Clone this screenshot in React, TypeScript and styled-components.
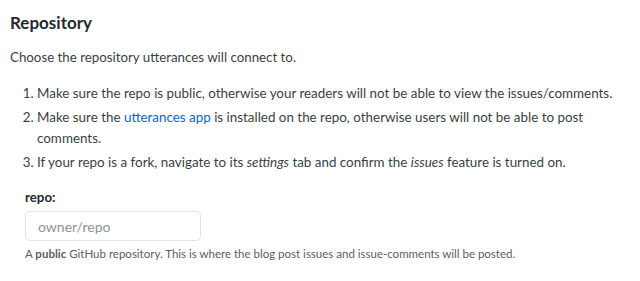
import React from "react";
import styled, { createGlobalStyle } from "styled-components";

const GlobalStyle = createGlobalStyle`
  body {
    margin: 0;
    background: #ffffff;
    font-family: Lato, "Open Sans", sans-serif;
    color: #24292e;
  }
`;

const Section = styled.section`
  padding: 11px 10px 0 10px;
`;

const Heading = styled.h3`
  margin: 0;
  font-size: 17px;
  font-weight: 700;
  line-height: 24px;
  color: #24292e;
`;

const Lead = styled.p`
  margin: 12px 0 0 0;
  font-size: 13.3px;
  line-height: 21px;
  color: #3a3f44;
`;

const Steps = styled.ol`
  margin: 15px 0 0 0;
  padding-left: 27px;
  font-size: 13.4px;
  line-height: 21px;
  color: #3a3f44;
`;

const Step = styled.li`
  & + & {
    margin-top: 3px;
  }
`;

const Link = styled.a`
  color: #0366d6;
  text-decoration: none;
`;

const Field = styled.div`
  margin-top: 14px;
  padding-left: 15px;
  display: flex;
  flex-direction: column;
  align-items: flex-start;
`;

const Label = styled.label`
  font-size: 13.3px;
  font-weight: 700;
  line-height: 20px;
  color: #24292e;
`;

const Input = styled.input`
  margin-top: 4px;
  box-sizing: border-box;
  width: 176px;
  height: 30px;
  padding: 0 12px;
  border: 1px solid #e1e4e8;
  border-radius: 5px;
  font-family: inherit;
  font-size: 14px;
  color: #24292e;
  outline: none;
  &::placeholder {
    color: #8c939a;
  }
`;

const Note = styled.p`
  margin: 4px 0 0 0;
  font-size: 11.5px;
  line-height: 18px;
  color: #586069;
`;

export default function App() {
  return (
    <>
      <GlobalStyle />
      <Section>
        <Heading>Repository</Heading>
        <Lead>Choose the repository utterances will connect to.</Lead>
        <Steps>
          <Step>
            Make sure the repo is public, otherwise your readers will not be able to view the
            issues/comments.
          </Step>
          <Step>
            Make sure the <Link href="#">utterances app</Link> is installed on the repo, otherwise
            users will not be able to post comments.
          </Step>
          <Step>
            If your repo is a fork, navigate to its <em>settings</em> tab and confirm the{" "}
            <em>issues</em> feature is turned on.
          </Step>
        </Steps>
        <Field>
          <Label htmlFor="repo">repo:</Label>
          <Input id="repo" type="text" placeholder="owner/repo" />
          <Note>
            A <strong>public</strong> GitHub repository. This is where the blog post issues and
            issue-comments will be posted.
          </Note>
        </Field>
      </Section>
    </>
  );
}
